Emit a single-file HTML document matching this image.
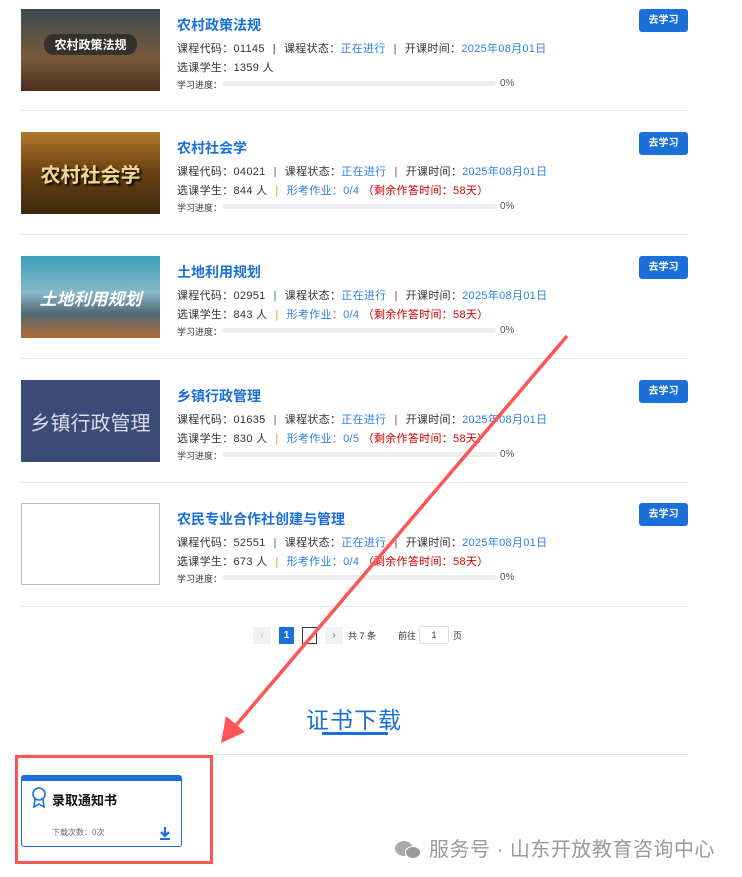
<!DOCTYPE html>
<html><head><meta charset="utf-8"><style>
*{margin:0;padding:0;box-sizing:border-box}
body{width:742px;height:877px;background:#fff;font-family:"Liberation Sans","Noto Sans CJK SC",sans-serif;position:relative;overflow:hidden;color:#333}
.row{position:absolute;left:21px;width:667px;height:124px;border-bottom:1px solid #e8e8e8}
.img{position:absolute;left:0;top:0;width:139px;height:82px;display:flex;align-items:center;justify-content:center;color:#fff;font-weight:bold}
.t{position:absolute;left:156px;top:6px;font-size:14px;font-weight:bold;color:#1a6fd8}
.l{position:absolute;left:156px;font-size:11px;color:#333;white-space:nowrap;letter-spacing:.3px}
.b{color:#2d7fe0}.sep{margin:0 8px}.o{color:#e8a000}.r{color:#c00}
.pg{position:absolute;left:156px;font-size:9px;color:#333}
.bar{position:absolute;left:201px;width:274px;height:5px;background:#eceef4;border-radius:3px}
.pct{position:absolute;left:479px;font-size:10px;color:#555}
.btn{position:absolute;right:0;top:0;width:49px;height:23px;background:#1a6fd8;color:#fff;font-size:10px;font-weight:bold;border-radius:3px;text-align:center;line-height:23px}
</style></head><body>

<div class="row" style="top:0;height:111px;padding-top:9px"><div style="position:absolute;top:9px;left:0;right:0;height:100px">
<div class="img" style="background:linear-gradient(#3a4a50,#7a5a3a 60%,#4a2e1e);font-size:12px"><span style="background:rgba(40,40,40,.8);border-radius:10px;padding:2px 10px;margin-top:-12px">农村政策法规</span></div>
<div class="t" style="top:6px">农村政策法规</div>
<div class="l" style="top:31px">课程代码：01145<span class="sep">|</span>课程状态：<span class="b">正在进行</span><span class="sep" style="color:#a03070">|</span>开课时间：<span class="b">2025年08月01日</span></div>
<div class="l" style="top:50px">选课学生：1359 人</div>
<div class="pg" style="top:69px">学习进度：</div><div class="bar" style="top:72px"></div><div class="pct" style="top:69px">0%</div>
<div class="btn">去学习</div></div></div>

<div class="row" style="top:111px"><div style="position:absolute;top:21px;left:0;right:0;height:100px">
<div class="img" style="background:linear-gradient(#b0782a,#6a4012 50%,#3a2a10);font-size:20px;color:#f0d890;text-shadow:2px 2px 2px #000">农村社会学</div>
<div class="t">农村社会学</div>
<div class="l" style="top:31px">课程代码：04021<span class="sep" style="color:#2a8040">|</span>课程状态：<span class="b">正在进行</span><span class="sep" style="color:#a03070">|</span>开课时间：<span class="b">2025年08月01日</span></div>
<div class="l" style="top:50px">选课学生：844 人<span class="sep o">|</span><span class="b">形考作业：0/4</span> <span class="r">（剩余作答时间：58天）</span></div>
<div class="pg" style="top:69px">学习进度：</div><div class="bar" style="top:72px"></div><div class="pct" style="top:69px">0%</div>
<div class="btn">去学习</div></div></div>

<div class="row" style="top:235px"><div style="position:absolute;top:21px;left:0;right:0;height:100px">
<div class="img" style="background:linear-gradient(#3aa0b8,#88b8c8 45%,#506878 70%,#b06a30);font-size:17px;font-style:italic">土地利用规划</div>
<div class="t">土地利用规划</div>
<div class="l" style="top:31px">课程代码：02951<span class="sep" style="color:#2a8040">|</span>课程状态：<span class="b">正在进行</span><span class="sep" style="color:#a03070">|</span>开课时间：<span class="b">2025年08月01日</span></div>
<div class="l" style="top:50px">选课学生：843 人<span class="sep o">|</span><span class="b">形考作业：0/4</span> <span class="r">（剩余作答时间：58天）</span></div>
<div class="pg" style="top:69px">学习进度：</div><div class="bar" style="top:72px"></div><div class="pct" style="top:69px">0%</div>
<div class="btn">去学习</div></div></div>

<div class="row" style="top:359px"><div style="position:absolute;top:21px;left:0;right:0;height:100px">
<div class="img" style="background:#3c4a78;font-size:20px;font-weight:normal;color:#dde">乡镇行政管理</div>
<div class="t">乡镇行政管理</div>
<div class="l" style="top:31px">课程代码：01635<span class="sep" style="color:#2a8040">|</span>课程状态：<span class="b">正在进行</span><span class="sep" style="color:#a03070">|</span>开课时间：<span class="b">2025年08月01日</span></div>
<div class="l" style="top:50px">选课学生：830 人<span class="sep o">|</span><span class="b">形考作业：0/5</span> <span class="r">（剩余作答时间：58天）</span></div>
<div class="pg" style="top:69px">学习进度：</div><div class="bar" style="top:72px"></div><div class="pct" style="top:69px">0%</div>
<div class="btn">去学习</div></div></div>

<div class="row" style="top:483px"><div style="position:absolute;top:20px;left:0;right:0;height:100px">
<div class="img" style="border:1px solid #bbb;background:#fff"></div>
<div class="t">农民专业合作社创建与管理</div>
<div class="l" style="top:31px">课程代码：52551<span class="sep" style="color:#2a8040">|</span>课程状态：<span class="b">正在进行</span><span class="sep" style="color:#a03070">|</span>开课时间：<span class="b">2025年08月01日</span></div>
<div class="l" style="top:50px">选课学生：673 人<span class="sep o">|</span><span class="b">形考作业：0/4</span> <span class="r">（剩余作答时间：58天）</span></div>
<div class="pg" style="top:69px">学习进度：</div><div class="bar" style="top:72px"></div><div class="pct" style="top:69px">0%</div>
<div class="btn">去学习</div></div></div>

<div style="position:absolute;top:627px;left:253px;width:18px;height:17px;background:#f2f2f2;color:#bbb;font-size:10px;text-align:center;line-height:17px">‹</div>
<div style="position:absolute;top:627px;left:279px;width:15px;height:17px;background:#1a6fd8;color:#fff;font-size:10px;font-weight:bold;text-align:center;line-height:17px">1</div>
<div style="position:absolute;top:627px;left:302px;width:15px;height:17px;border:1px solid #333"></div>
<div style="position:absolute;top:627px;left:325px;width:18px;height:17px;background:#f2f2f2;color:#666;font-size:10px;text-align:center;line-height:17px">›</div>
<div style="position:absolute;top:629px;left:348px;font-size:9px">共 7 条</div>
<div style="position:absolute;top:629px;left:398px;font-size:9px">前往</div>
<div style="position:absolute;top:626px;left:419px;width:30px;height:18px;border:1px solid #ddd;border-radius:3px;font-size:9px;text-align:center;line-height:16px">1</div>
<div style="position:absolute;top:629px;left:453px;font-size:9px">页</div>

<div style="position:absolute;top:701px;left:306px;font-size:23px;color:#1a6fd8;letter-spacing:1px">证书下载</div>
<div style="position:absolute;top:732px;left:322px;width:66px;height:3px;background:#1a6fd8"></div>
<div style="position:absolute;top:754px;left:21px;width:667px;height:1px;background:#e4e4e4"></div>

<div style="position:absolute;top:775px;left:21px;width:161px;height:72px;border:1px solid #1a6fd8;border-top:6px solid #1a6fd8;border-radius:3px">
<svg style="position:absolute;left:9px;top:6px" width="16" height="22" viewBox="0 0 16 22"><circle cx="8" cy="7" r="6" fill="none" stroke="#1a6fd8" stroke-width="1.6"/><path d="M4 12 L3 20 L8 17 L13 20 L12 12" fill="none" stroke="#1a6fd8" stroke-width="1.6"/></svg>
<div style="position:absolute;left:30px;top:9px;font-size:13px;font-weight:bold;color:#111">录取通知书</div>
<div style="position:absolute;left:30px;top:46px;font-size:8px;color:#666">下载次数：0次</div>
<svg style="position:absolute;left:137px;top:45px" width="12" height="14" viewBox="0 0 12 14"><path d="M6 1V9M2 6L6 10L10 6" stroke="#1a6fd8" stroke-width="2.2" fill="none"/><rect x="1" y="12" width="10" height="2" fill="#1a6fd8"/></svg>
</div>
<div style="position:absolute;left:15px;top:755px;width:198px;height:109px;border:3px solid #f55"></div>

<svg style="position:absolute;left:0;top:0" width="742" height="877"><line x1="567" y1="336" x2="232" y2="730" stroke="#f55" stroke-width="3.5"/><polygon points="221,743 226,716 245,732" fill="#f55"/></svg>

<div style="position:absolute;left:395px;top:833px;font-size:20px;color:#999;white-space:nowrap;letter-spacing:.5px"><span style="display:inline-block;width:28px;height:20px;vertical-align:-3px;position:relative"><span style="position:absolute;left:0;top:2px;width:18px;height:15px;border-radius:50%;background:#aaa"></span><span style="position:absolute;left:10px;top:7px;width:16px;height:13px;border-radius:50%;background:#999;border:1px solid #fff"></span></span> 服务号 · 山东开放教育咨询中心</div>
</body></html>
